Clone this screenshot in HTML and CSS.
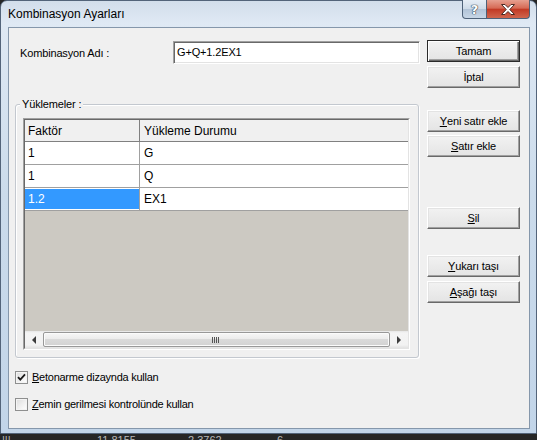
FILE: index.html
```html
<!DOCTYPE html>
<html lang="tr">
<head>
<meta charset="utf-8">
<title>Kombinasyon Ayarları</title>
<link rel="stylesheet" href="styles.css">
</head>
<body>
<div class="window">
  <div class="titlebar">
    <span class="title">Kombinasyon Ayarları</span>
    <div class="caption-btns">
      <span class="cap help">?</span>
      <span class="cap close">
        <svg width="16" height="11" viewBox="0 0 16 11"><path d="M1.5 0.5h3.5l3 3 3-3h3.5l-4.7 5 4.7 5h-3.5l-3-3-3 3h-3.5l4.7-5z" fill="#fff" stroke="#4a2a24" stroke-width="1" stroke-linejoin="round"/></svg>
      </span>
    </div>
  </div>
  <div class="client">
    <div class="left">
      <div class="name-row">
        <span class="name-label">Kombinasyon Adı :</span>
        <div class="textbox">G+Q+1.2EX1</div>
      </div>
      <div class="group">
        <span class="group-title">Yüklemeler :</span>
        <div class="grid-outer">
          <div class="grid">
            <div class="grid-head">
              <div class="c1">Faktör</div>
              <div class="c2">Yükleme Durumu</div>
            </div>
            <div class="grid-row">
              <div class="c1">1</div>
              <div class="c2">G</div>
            </div>
            <div class="grid-row">
              <div class="c1">1</div>
              <div class="c2">Q</div>
            </div>
            <div class="grid-row">
              <div class="c1 selected">1.2</div>
              <div class="c2">EX1</div>
            </div>
            <div class="grid-empty"></div>
            <div class="hscroll">
              <div class="sb-btn"><span class="tri-left"></span></div>
              <div class="thumb"><span class="grip"></span></div>
              <div class="sb-btn sb-right"><span class="tri-right"></span></div>
            </div>
          </div>
        </div>
      </div>
      <div class="check first">
        <span class="box">
          <svg width="11" height="11" viewBox="0 0 11 11"><path d="M2 5.2l2.3 2.4 4.7-5.2" fill="none" stroke="#1a1a1a" stroke-width="1.8"/></svg>
        </span>
        <span class="check-label"><u>B</u>etonarme dizaynda kullan</span>
      </div>
      <div class="check second">
        <span class="box"></span>
        <span class="check-label"><u>Z</u>emin gerilmesi kontrolünde kullan</span>
      </div>
    </div>
    <div class="right">
      <div class="btn default b-tamam">Tamam</div>
      <div class="btn b-iptal">İptal</div>
      <div class="btn b-yeni"><u>Y</u>eni satır ekle</div>
      <div class="btn b-satir"><u>S</u>atır ekle</div>
      <div class="btn b-sil"><u>S</u>il</div>
      <div class="btn b-yukari"><u>Y</u>ukarı taşı</div>
      <div class="btn b-asagi"><u>A</u>şağı taşı</div>
    </div>
  </div>
</div>
<div class="strip">
  <span class="s0">|||</span><span class="s1">11.8155</span><span class="s2">2.3762</span><span class="s3">6</span>
</div>
</body>
</html>
```
FILE: styles.css
```css
* { box-sizing: border-box; }

html, body {
  margin: 0;
  padding: 0;
}

body {
  width: 537px;
  height: 440px;
  overflow: hidden;
  background: #262626;
  font-family: "Liberation Sans", Arial, sans-serif;
  font-size: 11px;
  color: #000;
}

.window {
  width: 537px;
  height: 434px;
  border: 1px solid #53647a;
  border-radius: 7px 7px 0 0;
  background: linear-gradient(to bottom, #d2deeb 0, #dfe9f4 22px, #cbdbeb 45%, #c2d5e9 100%);
  padding: 0 6px 4px 7px;
  display: flex;
  flex-direction: column;
}

.titlebar {
  height: 26px;
  display: flex;
  justify-content: space-between;
  align-items: flex-start;
}

.title {
  margin-top: 6px;
  font-size: 12px;
  line-height: 14px;
  color: #000;
}

.caption-btns {
  display: flex;
  margin-top: -1px;
}

.cap {
  height: 19px;
  display: flex;
  align-items: center;
  justify-content: center;
  border: 1px solid #4e6178;
  border-top: none;
}

.help {
  width: 25px;
  border-radius: 0 0 0 4px;
  background: linear-gradient(to bottom, #e6edf5 0, #cfdbe8 48%, #b2c3d7 52%, #c7d6e6 100%);
  color: #fff;
  font-family: "DejaVu Sans", sans-serif;
  font-weight: bold;
  font-size: 13px;
  text-shadow: 0 0 1px #2c3a4a, 0 0 1px #2c3a4a, 0 0 1px #2c3a4a;
}

.close {
  width: 44px;
  margin-left: -1px;
  border-radius: 0 0 4px 0;
  background: linear-gradient(to bottom, #e6a090 0, #d66a55 45%, #c23a25 52%, #d0664e 100%);
}

.client {
  flex: 1;
  background: #f0f0f0;
  border: 1px solid #8597ab;
  display: flex;
  padding: 12px 9px 0 6px;
  letter-spacing: -0.15px;
}

.left {
  width: 405px;
  display: flex;
  flex-direction: column;
}

.right {
  margin-left: 7px;
  width: 93px;
  display: flex;
  flex-direction: column;
}

.name-row {
  margin-top: 1px;
  height: 23px;
  display: flex;
  align-items: center;
}

.name-label {
  flex: 1;
  margin-left: 5px;
}

.textbox {
  width: 247px;
  height: 23px;
  background: #fff;
  border: 1px solid;
  border-color: #a0a0a0 #fff #fff #a0a0a0;
  box-shadow: inset 1px 1px #696969, inset -1px -1px #e3e3e3;
  padding-left: 3px;
  line-height: 21px;
}

.group {
  position: relative;
  margin-top: 40px;
  width: 404px;
  height: 254px;
  border: 1px solid #c3c8cf;
  border-radius: 3px;
  box-shadow: inset 1px 1px #fff, 1px 1px #fff;
  padding: 13px 0 0 7px;
}

.group-title {
  position: absolute;
  top: -7px;
  left: 4px;
  padding: 0 2px;
  line-height: 13px;
  background: #f0f0f0;
}

.grid-outer {
  width: 387px;
  height: 232px;
  border: 1px solid;
  border-color: #a0a0a0 #fff #fff #a0a0a0;
}

.grid {
  height: 100%;
  border: 1px solid;
  border-color: #696969 #e3e3e3 #e3e3e3 #696969;
  display: flex;
  flex-direction: column;
  background: #ccc9c2;
  font-size: 12px;
  letter-spacing: 0;
}

.grid-head {
  height: 22px;
  display: flex;
  background: #f0f0f0;
  border-bottom: 1px solid #808080;
}

.grid-head .c1 {
  border-right: 1px solid #808080;
}

.grid-row {
  height: 23px;
  display: flex;
  background: #fff;
  border-bottom: 1px solid #a0a0a0;
}

.c1 {
  width: 115px;
  padding-left: 3px;
  border-right: 1px solid #a0a0a0;
  display: flex;
  align-items: center;
}

.c2 {
  flex: 1;
  padding-left: 4px;
  display: flex;
  align-items: center;
}

.selected {
  background: #3399ff;
  color: #fff;
  box-shadow: inset 0 1px #fff, inset 0 -1px #fff;
}

.grid-empty {
  flex: 1;
}

.hscroll {
  height: 17px;
  display: flex;
  align-items: center;
  background: linear-gradient(to bottom, #e6e6e6 0, #f4f4f4 2px, #f2f2f2 14px, #e2e2e2 100%);
}

.sb-btn {
  width: 18px;
  height: 17px;
  display: flex;
  align-items: center;
  justify-content: center;
}

.sb-right {
  flex: 1;
}

.tri-left {
  width: 0;
  height: 0;
  border-top: 4px solid transparent;
  border-bottom: 4px solid transparent;
  border-right: 4px solid #3c3c3c;
}

.tri-right {
  width: 0;
  height: 0;
  border-top: 4px solid transparent;
  border-bottom: 4px solid transparent;
  border-left: 4px solid #3c3c3c;
}

.thumb {
  width: 347px;
  height: 15px;
  border: 1px solid #989898;
  border-radius: 2px;
  background: linear-gradient(to bottom, #f7f7f7 0, #ececec 45%, #dadada 50%, #d2d2d2 100%);
  box-shadow: inset 0 0 0 1px #fbfbfb;
  display: flex;
  align-items: center;
  justify-content: center;
}

.grip {
  width: 7px;
  height: 6px;
  background: repeating-linear-gradient(to right, #555 0, #555 1px, transparent 1px, transparent 2px);
  margin-left: -3px;
}

.check {
  height: 13px;
  display: flex;
  align-items: center;
}

.check.first { margin-top: 13px; }
.check.second { margin-top: 14px; }

.box {
  width: 13px;
  height: 13px;
  border: 1px solid #8e8f8f;
  background: linear-gradient(135deg, #dcdcdc 0, #f6f6f6 70%, #fff 100%);
  box-shadow: inset 0 0 0 1px #f4f4f4;
  display: flex;
  align-items: center;
  justify-content: center;
}

.check-label {
  margin-left: 4px;
  line-height: 13px;
  letter-spacing: -0.25px;
}

.btn {
  height: 22px;
  display: flex;
  align-items: center;
  justify-content: center;
  border: 1px solid;
  border-color: #fff #696969 #696969 #fff;
  box-shadow: inset -1px -1px #a0a0a0, inset 1px 1px #e3e3e3;
  background: linear-gradient(to bottom, #f2f2f2 0, #ebebeb 50%, #e4e4e4 100%);
}

.btn.default {
  border: 1px solid #2a2a2a;
  box-shadow: inset 1px 1px #fff, inset -1px -1px #696969, inset -2px -2px #a0a0a0;
}

.b-iptal { margin-top: 4px; }
.b-yeni { margin-top: 22px; }
.b-satir { margin-top: 3px; }
.b-sil { margin-top: 50px; }
.b-yukari { margin-top: 26px; }
.b-asagi { margin-top: 4px; }

.strip {
  height: 6px;
  overflow: hidden;
  display: flex;
  color: #b8b8b8;
  font-size: 11px;
  line-height: 11px;
  padding-top: 1px;
}

.s0 { width: 97px; padding-left: 2px; }
.s1 { width: 91px; }
.s2 { width: 89px; }
.s3 { width: 40px; }
```
